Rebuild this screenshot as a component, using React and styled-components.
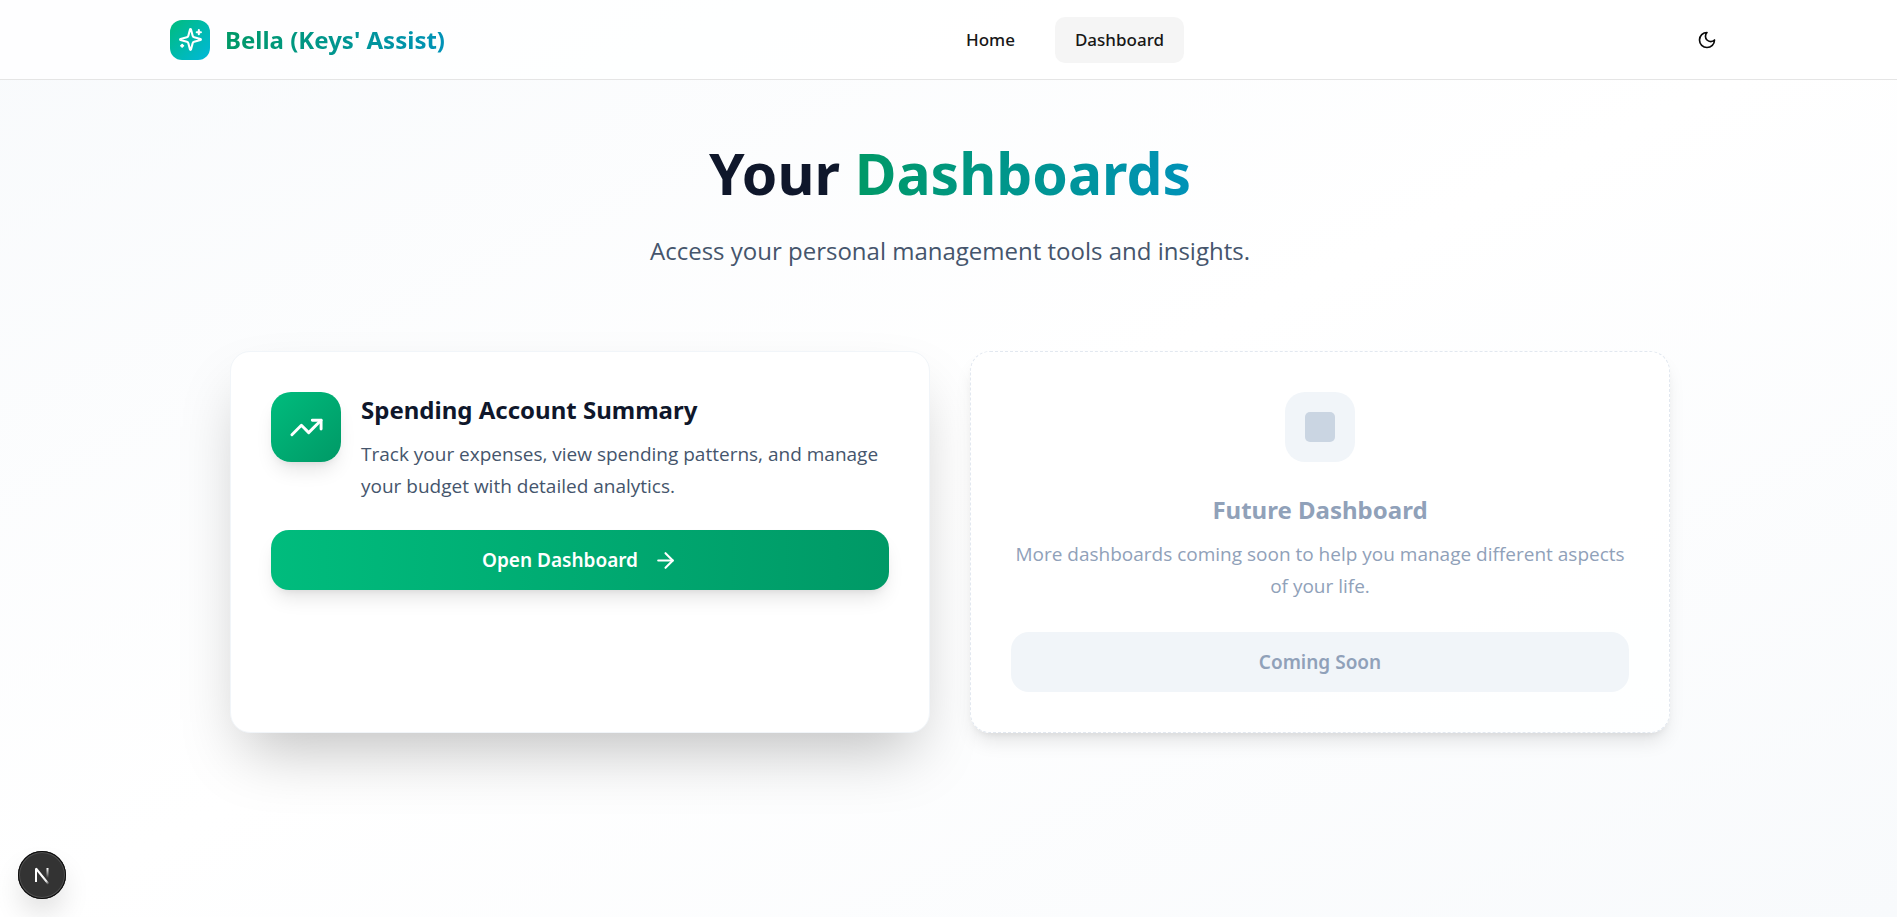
import React from "react";
import styled, { createGlobalStyle, css } from "styled-components";
import { ArrowRight, TrendingUp } from "lucide-react";

const headingFont = `"Segoe UI", "Noto Sans", "Open Sans", sans-serif`;

const GlobalStyle = createGlobalStyle`
  *, *::before, *::after { box-sizing: border-box; }
  body {
    margin: 0;
    font-family: "Segoe UI", "Open Sans", "Noto Sans", sans-serif;
    color: #0f172b;
  }
  h1, h2, p { margin: 0; }
  a { color: inherit; text-decoration: none; }
  button { font: inherit; border: 0; cursor: pointer; }
`;

const Page = styled.div`
  min-height: 100vh;
  padding-left: 3px;
  background: linear-gradient(to bottom right, #f8fafc, #ffffff, #f8fafc);
`;

const Header = styled.header`
  margin-left: -3px;
  padding-left: 3px;
  background: rgba(255, 255, 255, 0.8);
  border-bottom: 1px solid #e5e5e5;
`;

const HeaderInner = styled.div`
  display: flex;
  align-items: center;
  justify-content: space-between;
  max-width: 1600px;
  height: 79px;
  margin: 0 auto;
  padding: 0 20px;
`;

const gradientText = css`
  color: transparent;
  background: linear-gradient(to right, #009966, #0092b8);
  background-clip: text;
  -webkit-background-clip: text;
`;

const Brand = styled.a`
  display: flex;
  align-items: center;
  gap: 15px;
`;

const BrandMark = styled.span`
  display: grid;
  place-items: center;
  width: 40px;
  height: 40px;
  border-radius: 12px;
  color: #fff;
  background: linear-gradient(to bottom right, #00bc7d, #00b8db);
`;

const BrandName = styled.span`
  font-family: ${headingFont};
  font-size: 24px;
  line-height: 36px;
  font-weight: 700;
  ${gradientText}
`;

const Nav = styled.nav`
  display: flex;
  gap: 20px;
`;

const NavLink = styled.a`
  padding: 0 20px;
  border-radius: 10px;
  font-family: ${headingFont};
  font-size: 17px;
  line-height: 46px;
  font-weight: 500;
  color: #171717;
  background: ${({ $active }) => ($active ? "#f5f5f5" : "transparent")};
`;

const IconButton = styled.button`
  display: grid;
  place-items: center;
  width: 45px;
  height: 45px;
  padding: 0;
  border-radius: 10px;
  color: #0a0a0a;
  background: transparent;
`;

const Main = styled.main`
  max-width: 1440px;
  margin: 0 auto;
  padding: 60px 0;
`;

const Intro = styled.section`
  margin-bottom: 80px;
  text-align: center;
`;

const PageTitle = styled.h1`
  margin-bottom: 25px;
  font-family: ${headingFont};
  font-size: 57px;
  line-height: 66px;
  font-weight: 700;
`;

const Highlight = styled.span`
  ${gradientText}
`;

const Lead = styled.p`
  font-size: 24px;
  line-height: 40px;
  color: #45556c;
`;

const Cards = styled.div`
  display: grid;
  grid-template-columns: repeat(2, minmax(0, 1fr));
  gap: 40px;
`;

const Card = styled.article`
  padding: 40px;
  border-radius: 20px;
  border: 1px ${({ $muted }) => ($muted ? "dashed #e2e8f0" : "solid #f1f5f9")};
  background: ${({ $muted }) => ($muted ? "rgba(255, 255, 255, 0.8)" : "#fff")};
  text-align: ${({ $muted }) => ($muted ? "center" : "left")};
  box-shadow: ${({ $muted }) =>
    $muted
      ? "0 12px 19px -4px rgba(0, 0, 0, 0.1), 0 5px 8px -5px rgba(0, 0, 0, 0.1)"
      : "0 31px 62px -15px rgba(0, 0, 0, 0.25)"};
`;

const CardHead = styled.div`
  display: flex;
  gap: 20px;
  margin-bottom: 28px;
`;

const CardText = styled.div`
  margin-bottom: ${({ $spaced }) => ($spaced ? "30px" : "0")};
`;

const Tile = styled.div`
  display: grid;
  place-items: center;
  flex: none;
  width: 70px;
  height: 70px;
  border-radius: 20px;
  color: #fff;
  ${({ $muted }) =>
    $muted
      ? css`
          margin: 0 auto 30px;
          background: #f1f5f9;
        `
      : css`
          background: linear-gradient(to bottom right, #00bc7d, #009966);
          box-shadow: 0 12px 19px -4px rgba(0, 0, 0, 0.1), 0 5px 8px -5px rgba(0, 0, 0, 0.1);
        `}
`;

const Placeholder = styled.span`
  width: 30px;
  height: 30px;
  border-radius: 5px;
  background: #cad5e2;
`;

const CardTitle = styled.h2`
  margin-bottom: 10px;
  font-family: ${headingFont};
  font-size: 24px;
  line-height: 36px;
  font-weight: 700;
  color: ${({ $muted }) => ($muted ? "#90a1b9" : "#0f172b")};
`;

const CardCopy = styled.p`
  font-size: 19px;
  line-height: 32px;
  color: ${({ $muted }) => ($muted ? "#90a1b9" : "#45556c")};
`;

const Action = styled.button`
  && {
    display: flex;
    align-items: center;
    justify-content: center;
    gap: 15px;
    width: 100%;
    height: 60px;
    border-radius: 18px;
    font-family: ${headingFont};
    font-size: 19px;
    font-weight: 600;
    color: #fff;
    background: linear-gradient(to right, #00bc7d, #009966);
    box-shadow: 0 12px 19px -4px rgba(0, 0, 0, 0.1), 0 5px 8px -5px rgba(0, 0, 0, 0.1);
  }
  &&:disabled {
    color: #90a1b9;
    background: #f1f5f9;
    box-shadow: none;
    cursor: not-allowed;
  }
`;

const DevBadge = styled.button`
  position: fixed;
  left: 18px;
  bottom: 18px;
  display: grid;
  place-items: center;
  width: 48px;
  height: 48px;
  padding: 0;
  border-radius: 50%;
  background: #333;
  box-shadow: inset 0 0 0 1px #0a0a0a, inset 0 0 0 2px #505050, 0 16px 32px -8px rgba(0, 0, 0, 0.24);
`;

const SparklesIcon = () => (
  <svg width="25" height="25" viewBox="0 0 24 24" fill="none" stroke="currentColor" strokeWidth="2" strokeLinecap="round" strokeLinejoin="round" aria-hidden="true">
    <path d="M9.937 15.5A2 2 0 0 0 8.5 14.063l-6.135-1.582a.5.5 0 0 1 0-.962L8.5 9.936A2 2 0 0 0 9.937 8.5l1.582-6.135a.5.5 0 0 1 .963 0L14.063 8.5A2 2 0 0 0 15.5 9.937l6.135 1.581a.5.5 0 0 1 0 .964L15.5 14.063a2 2 0 0 0-1.437 1.437l-1.582 6.135a.5.5 0 0 1-.963 0z" />
    <path d="M20 3v4M22 5h-4M4 17v2M5 18H3" />
  </svg>
);

const MoonIcon = () => (
  <svg width="20" height="20" viewBox="0 0 24 24" fill="none" stroke="currentColor" strokeWidth="2" strokeLinecap="round" strokeLinejoin="round" aria-hidden="true">
    <path d="M12 3a6 6 0 0 0 9 9 9 9 0 1 1-9-9Z" />
  </svg>
);

const DevIcon = () => (
  <svg width="18" height="20" viewBox="0 0 18 20" fill="none" aria-hidden="true">
    <defs>
      <linearGradient id="dev-diagonal" gradientUnits="userSpaceOnUse" x1="10" y1="11" x2="16" y2="19">
        <stop stopColor="#fff" />
        <stop offset="0.6" stopColor="#fff" stopOpacity="0.9" />
        <stop offset="1" stopColor="#fff" stopOpacity="0" />
      </linearGradient>
      <linearGradient id="dev-stem" gradientUnits="userSpaceOnUse" x1="15" y1="3" x2="15" y2="13">
        <stop stopColor="#fff" />
        <stop offset="1" stopColor="#fff" stopOpacity="0" />
      </linearGradient>
    </defs>
    <path d="M3 17V3.500L15.500 19" stroke="url(#dev-diagonal)" strokeWidth="2" strokeLinejoin="bevel" />
    <path d="M14.500 3v11" stroke="url(#dev-stem)" strokeWidth="2" />
  </svg>
);

export default function App() {
  return (
    <Page>
      <GlobalStyle />
      <Header>
        <HeaderInner>
          <Brand href="#home">
            <BrandMark>
              <SparklesIcon />
            </BrandMark>
            <BrandName>Bella (Keys' Assist)</BrandName>
          </Brand>
          <Nav aria-label="Main">
            <NavLink href="#home">Home</NavLink>
            <NavLink href="#dashboard" $active aria-current="page">
              Dashboard
            </NavLink>
          </Nav>
          <IconButton type="button" aria-label="Toggle theme">
            <MoonIcon />
          </IconButton>
        </HeaderInner>
      </Header>

      <Main>
        <Intro>
          <PageTitle>
            Your <Highlight>Dashboards</Highlight>
          </PageTitle>
          <Lead>Access your personal management tools and insights.</Lead>
        </Intro>

        <Cards>
          <Card>
            <CardHead>
              <Tile>
                <TrendingUp size={35} aria-hidden="true" />
              </Tile>
              <CardText>
                <CardTitle>Spending Account Summary</CardTitle>
                <CardCopy>
                  Track your expenses, view spending patterns, and manage your budget with detailed
                  analytics.
                </CardCopy>
              </CardText>
            </CardHead>
            <Action type="button">
              Open Dashboard
              <ArrowRight size={25} aria-hidden="true" />
            </Action>
          </Card>

          <Card $muted>
            <Tile $muted>
              <Placeholder />
            </Tile>
            <CardText $spaced>
              <CardTitle $muted>Future Dashboard</CardTitle>
              <CardCopy $muted>
                More dashboards coming soon to help you manage different aspects of your life.
              </CardCopy>
            </CardText>
            <Action type="button" disabled>
              Coming Soon
            </Action>
          </Card>
        </Cards>
      </Main>

      <DevBadge type="button" aria-label="Open developer tools">
        <DevIcon />
      </DevBadge>
    </Page>
  );
}
